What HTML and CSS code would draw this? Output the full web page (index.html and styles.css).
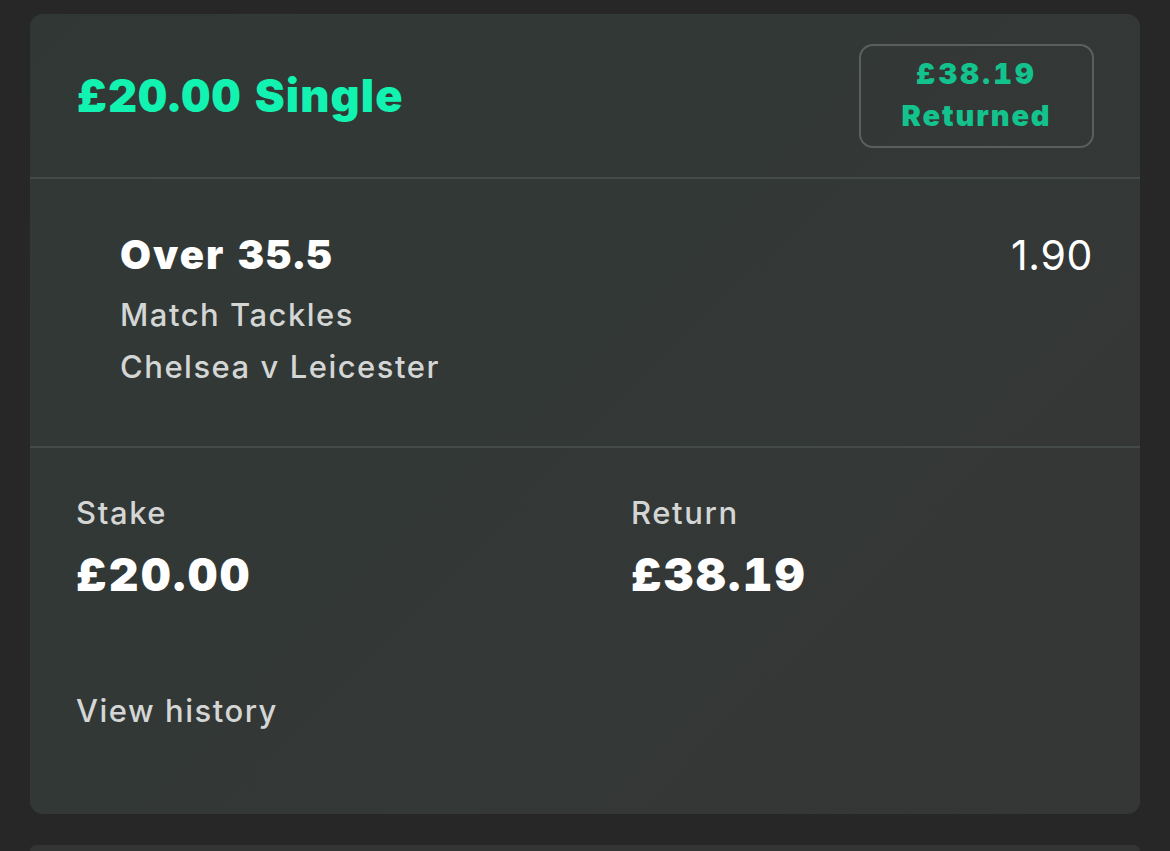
FILE: index.html
```html
<!DOCTYPE html>
<html lang="en">
<head>
<meta charset="utf-8">
<title>Bet receipt</title>
<link rel="stylesheet" href="styles.css">
</head>
<body>
<div class="page">
  <article class="bet-card">
    <header class="bet-header">
      <h1 class="bet-title">£20.00 Single</h1>
      <div class="badge">
        <span class="badge-line badge-amount">£38.19</span>
        <span class="badge-line">Returned</span>
      </div>
    </header>
    <section class="selection">
      <div class="selection-info">
        <div class="selection-name">Over 35.5</div>
        <div class="selection-market">Match Tackles</div>
        <div class="selection-event">Chelsea v Leicester</div>
      </div>
      <div class="selection-odds">1.90</div>
    </section>
    <section class="summary">
      <div class="summary-grid">
        <div class="summary-item">
          <div class="summary-label">Stake</div>
          <div class="summary-value">£20.00</div>
        </div>
        <div class="summary-item">
          <div class="summary-label">Return</div>
          <div class="summary-value">£38.19</div>
        </div>
      </div>
      <a class="history-link">View history</a>
    </section>
  </article>
  <div class="next-card"></div>
</div>
</body>
</html>
```

FILE: styles.css
```css
html, body {
  margin: 0;
  padding: 0;
  background: #272727;
  height: 100%;
  overflow: hidden;
}
body {
  font-family: Inter, "Noto Sans", "Liberation Sans", sans-serif;
  font-variant-numeric: tabular-nums;
  -webkit-font-smoothing: antialiased;
}
.page {
  padding: 14px 30px 0 30px;
  display: flex;
  flex-direction: column;
  gap: 31px;
}
.bet-card {
  height: 800px;
  box-sizing: border-box;
  border-radius: 13px;
  background: linear-gradient(135deg, #303836 0%, #333836 50%, #353636 100%);
  display: flex;
  flex-direction: column;
  flex: none;
}
.next-card {
  height: 6px;
  flex: none;
  border-radius: 13px 13px 0 0;
  background: #333535;
}
.bet-header {
  height: 165px;
  box-sizing: border-box;
  padding: 0 46px 0 47px;
  display: flex;
  align-items: center;
  justify-content: space-between;
  border-bottom: 2px solid #444a48;
  flex: none;
}
.bet-title {
  margin: 0;
  font-size: 45px;
  line-height: 56px;
  font-weight: 900;
  color: #12f2b0;
  letter-spacing: 1.1px;
}
.badge {
  width: 235px;
  height: 104px;
  box-sizing: border-box;
  border: 2px solid #5b605e;
  border-radius: 14px;
  padding-top: 7px;
  display: flex;
  flex-direction: column;
  align-items: center;
}
.badge-line {
  font-size: 29px;
  line-height: 42px;
  font-weight: 900;
  color: #13c38e;
  letter-spacing: 1.9px;
}
.badge-amount {
  letter-spacing: 3.2px;
}
.selection {
  height: 269px;
  box-sizing: border-box;
  padding: 52px 47px 0 90px;
  border-bottom: 2px solid #444a48;
  display: flex;
  justify-content: space-between;
  align-items: flex-start;
  flex: none;
}
.selection-name {
  font-size: 40px;
  line-height: 48px;
  font-weight: 900;
  color: #ffffff;
  letter-spacing: 2px;
}
.selection-market,
.selection-event {
  font-size: 31px;
  line-height: 40px;
  color: #d4d6d5;
  font-weight: 500;
  letter-spacing: 1.5px;
}
.selection-market {
  margin-top: 16px;
}
.selection-event {
  margin-top: 12px;
}
.selection-odds {
  font-size: 41px;
  line-height: 48px;
  color: #ffffff;
  font-weight: 400;
  font-variant-numeric: proportional-nums;
  letter-spacing: 0.6px;
}
.summary {
  padding: 45px 46px 0 46px;
  display: flex;
  flex-direction: column;
}
.summary-grid {
  display: grid;
  grid-template-columns: 555px 1fr;
}
.summary-label {
  font-size: 31px;
  line-height: 40px;
  color: #d4d6d5;
  font-weight: 500;
  letter-spacing: 1.6px;
}
.summary-value {
  margin-top: 13px;
  font-size: 46px;
  line-height: 56px;
  font-weight: 900;
  color: #ffffff;
  letter-spacing: 2.4px;
}
.history-link {
  margin-top: 89px;
  font-size: 31px;
  line-height: 40px;
  color: #d4d6d5;
  font-weight: 500;
  letter-spacing: 1.5px;
}
```
